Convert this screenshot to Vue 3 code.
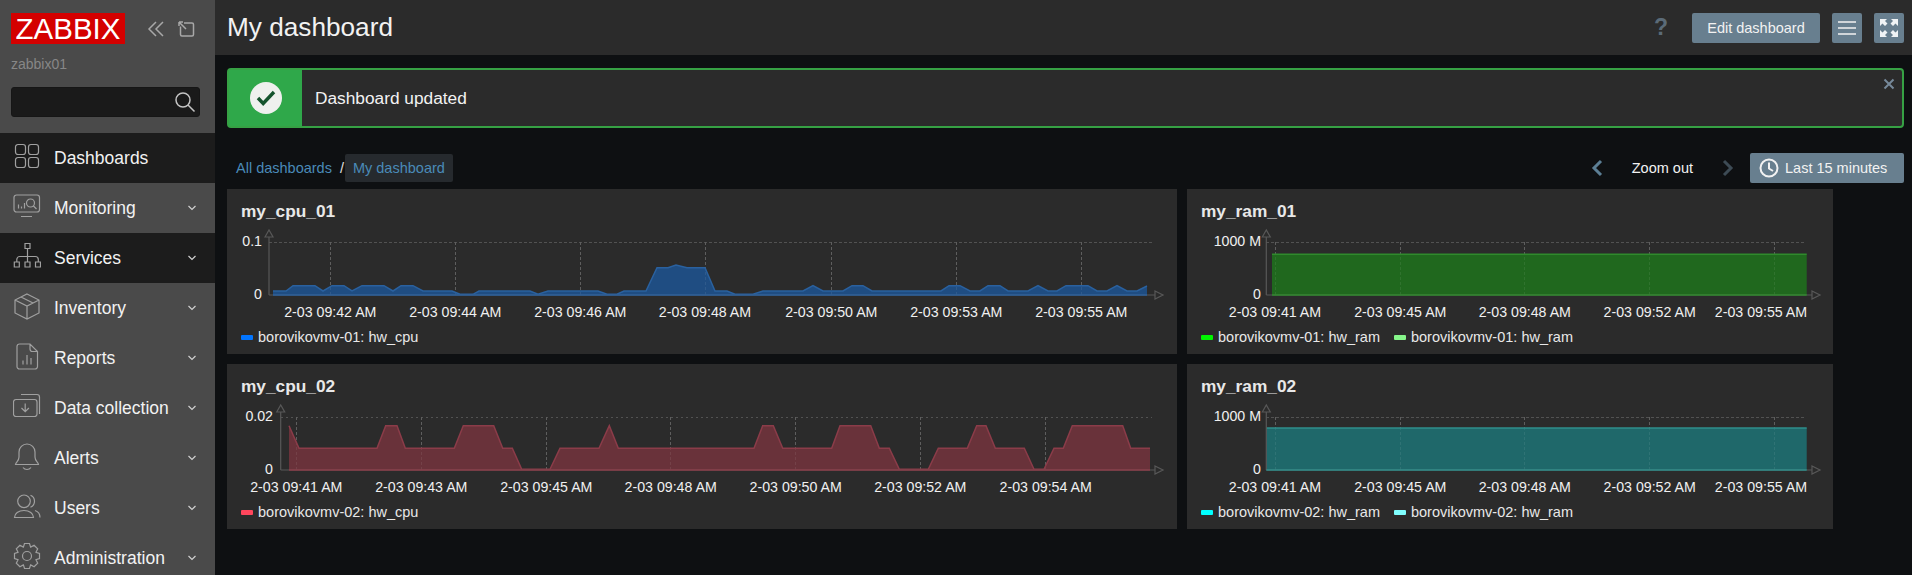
<script setup>
// gear outline for the Administration icon
const gearPath = () => {
  const cx = 14, cy = 13, out = 12.8, inn = 9.6
  let d = ''
  for (let i = 0; i < 8; i++) {
    const a = (i * Math.PI) / 4 - Math.PI / 2
    const pts = [[inn, a - 0.39], [out, a - 0.2], [out, a + 0.2], [inn, a + 0.39]]
    pts.forEach(([r, t], j) => {
      const x = (cx + r * Math.cos(t)).toFixed(1)
      const y = (cy + r * Math.sin(t)).toFixed(1)
      d += (i === 0 && j === 0 ? 'M' : 'L') + x + ' ' + y
    })
  }
  return d + 'z M18.5 13a4.5 4.5 0 1 1-9 0a4.5 4.5 0 1 1 9 0z'
}

const menu = [
  { name: 'Dashboards', dark: true, arrow: false, d: 'M5 1.5h5a2.5 2.5 0 0 1 2.5 2.5v5a2.5 2.5 0 0 1-2.5 2.5h-5a2.5 2.5 0 0 1-2.5-2.5v-5a2.5 2.5 0 0 1 2.5-2.5z M18 1.5h5a2.5 2.5 0 0 1 2.5 2.5v5a2.5 2.5 0 0 1-2.5 2.5h-5a2.5 2.5 0 0 1-2.5-2.5v-5a2.5 2.5 0 0 1 2.5-2.5z M5 14.5h5a2.5 2.5 0 0 1 2.5 2.5v5a2.5 2.5 0 0 1-2.5 2.5h-5a2.5 2.5 0 0 1-2.5-2.5v-5a2.5 2.5 0 0 1 2.5-2.5z M18 14.5h5a2.5 2.5 0 0 1 2.5 2.5v5a2.5 2.5 0 0 1-2.5 2.5h-5a2.5 2.5 0 0 1-2.5-2.5v-5a2.5 2.5 0 0 1 2.5-2.5z' },
  { name: 'Monitoring', arrow: true, d: 'M3.5 2h20.5a2.5 2.5 0 0 1 2.5 2.5v12a2.5 2.5 0 0 1-2.5 2.5h-20.5a2.5 2.5 0 0 1-2.5-2.5v-12a2.5 2.5 0 0 1 2.5-2.5z M8 23.5h11 M5.5 11.5v4 M8.5 13.5v2 M11.5 10v5.5 M21.5 10a4 4 0 1 1-8 0a4 4 0 1 1 8 0z M20.5 13l3 3' },
  { name: 'Services', dark: true, arrow: true, d: 'M12 .5h5v5h-5z M14.5 5.5v13.5 M3.8 19v-2.5a3 3 0 0 1 3-3h15.5a3 3 0 0 1 3 3v2.5 M1.3 19h5v5h-5z M12 19h5v5h-5z M22.5 19h5v5h-5z' },
  { name: 'Inventory', arrow: true, d: 'M14 1l12 6v13l-12 6l-12-6v-13z M2 7l12 6l12-6 M14 13v13 M8 4l12 6' },
  { name: 'Reports', arrow: true, d: 'M6.5 1h10.5l7.5 7.5v15a2.5 2.5 0 0 1-2.5 2.5h-15.5a2.5 2.5 0 0 1-2.5-2.5v-20a2.5 2.5 0 0 1 2.5-2.5z M17 1v5a2.5 2.5 0 0 0 2.5 2.5h5 M10 17.5v4 M14 12v9.5 M18 15v6.5' },
  { name: 'Data collection', arrow: true, d: 'M3 6.5h18.5a2.5 2.5 0 0 1 2.5 2.5v12a2.5 2.5 0 0 1-2.5 2.5h-18.5a2.5 2.5 0 0 1-2.5-2.5v-12a2.5 2.5 0 0 1 2.5-2.5z M8 1.5h16a2.5 2.5 0 0 1 2.5 2.5v17 M12.2 10.5v8 M8.5 15l3.7 3.7l3.7-3.7' },
  { name: 'Alerts', arrow: true, d: 'M14 1a8 8 0 0 0-8 8v5c0 4-3 5-3.5 7.5h23c-.5-2.5-3.5-3.5-3.5-7.5v-5a8 8 0 0 0-8-8z M10 24.5a5 5 0 0 0 8 0' },
  { name: 'Users', arrow: true, d: 'M17.3 8.3a6.3 6.3 0 1 1-12.6 0a6.3 6.3 0 1 1 12.6 0z M1.5 24.5c0-4 4-7 9.5-7s9.5 3 9.5 7z M17.5 2.3a6.5 6.5 0 0 1 0 12 M22 17.5c3 1 5 4 5 7' },
  { name: 'Administration', arrow: true, d: gearPath() },
]

const cpu1Points = [
  [273, 291], [286, 291], [293, 285.7], [315, 285.7], [323, 291], [332, 285.7], [344, 285.7], [352, 291],
  [362, 285.7], [384, 285.7], [393, 291], [401, 285.7], [413, 285.7], [423, 291], [452, 291], [460, 294.3],
  [473, 294.3], [479, 291], [530, 291], [538, 294.3], [548, 291], [598, 291], [607, 294.3], [617, 294.3],
  [624, 291], [646, 291], [657, 267.7], [668, 267.7], [676, 265], [687, 267.7], [705, 267.7], [715, 291],
  [727, 291], [735, 294.3], [753, 294.3], [763, 291], [803, 291], [813, 285.7], [823, 291], [843, 291],
  [852, 285.7], [863, 285.7], [872, 291], [941, 291], [949, 285.7], [960, 285.7], [970, 291], [980, 291],
  [988, 285.7], [1000, 285.7], [1008, 291], [1028, 291], [1038, 285.7], [1048, 291], [1057, 291],
  [1066, 285.7], [1088, 285.7], [1097, 291], [1107, 291], [1117, 285.7], [1127, 291], [1137, 291], [1147, 286],
]
const cpu2Points = [
  [289, 425.7], [299, 448.3], [377, 448.3], [385.7, 425.7], [397, 425.7], [405.3, 448.3], [454.3, 448.3],
  [463.3, 425.7], [493.7, 425.7], [502.7, 448.3], [512.3, 448.3], [521.7, 469.3], [550, 469.3], [560, 448.3],
  [599, 448.3], [609.3, 425.7], [618.3, 448.3], [754, 448.3], [762.7, 425.7], [773.3, 425.7], [782.7, 448.3],
  [831.7, 448.3], [840, 425.7], [870.7, 425.7], [879.3, 448.3], [889.3, 448.3], [899.3, 469.3], [928.3, 469.3],
  [938.3, 448.3], [967.3, 448.3], [976.7, 425.7], [986, 425.7], [995.3, 448.3], [1024.3, 448.3], [1034, 469.3],
  [1044, 469.3], [1054, 448.3], [1063.3, 448.3], [1072.3, 425.7], [1122.7, 425.7], [1130.7, 448.3], [1150, 448.3],
]

// charts use page coordinates, the viewBox moves them into each widget
const charts = [
  {
    title: 'my_cpu_01', left: 227, top: 219, width: 950, axis: 269, yEnd: 262, bottom: 295, gridTop: 242.3, xEnd: 1163, gridEnd: 1152,
    yTop: '0.1', grid: [330.3, 455.3, 580.3, 705, 831.3, 956.3, 1081.3],
    labels: [[330.3, '09:42'], [455.3, '09:44'], [580.3, '09:46'], [705, '09:48'], [831.3, '09:50'], [956.3, '09:53'], [1081.3, '09:55']],
    points: cpu1Points, fill: '#1f4e85', line: '#2a619f',
    legend: [{ color: '#0275ff', text: 'borovikovmv-01: hw_cpu' }],
  },
  {
    title: 'my_ram_01', left: 1187, top: 219, width: 646, axis: 1266.3, yEnd: 1261, bottom: 295, gridTop: 242.3, xEnd: 1820, gridEnd: 1805,
    yTop: '1000 M', grid: [1275, 1400.3, 1524.8, 1649.7, 1774],
    labels: [[1275, '09:41'], [1400.3, '09:45'], [1524.8, '09:48'], [1649.7, '09:52'], [1761, '09:55']],
    points: [[1272, 254.3], [1806.7, 254.3]], fill: '#206a1e', line: '#2f8a2c',
    legend: [{ color: '#00f500', text: 'borovikovmv-01: hw_ram' }, { color: '#86f68a', text: 'borovikovmv-01: hw_ram' }],
  },
  {
    title: 'my_cpu_02', left: 227, top: 394, width: 950, axis: 280.7, yEnd: 273, bottom: 470, gridTop: 417.3, xEnd: 1163, gridEnd: 1152,
    yTop: '0.02', grid: [296.3, 421.3, 546.3, 670.7, 795.7, 920.3, 1045.7],
    labels: [[296.3, '09:41'], [421.3, '09:43'], [546.3, '09:45'], [670.7, '09:48'], [795.7, '09:50'], [920.3, '09:52'], [1045.7, '09:54']],
    points: cpu2Points, fill: '#6b333b', line: '#8b3c49',
    legend: [{ color: '#ff465c', text: 'borovikovmv-02: hw_cpu' }],
  },
  {
    title: 'my_ram_02', left: 1187, top: 394, width: 646, axis: 1266.3, yEnd: 1261, bottom: 470, gridTop: 417.3, xEnd: 1820, gridEnd: 1805,
    yTop: '1000 M', grid: [1275, 1400.3, 1524.8, 1649.7, 1774],
    labels: [[1275, '09:41'], [1400.3, '09:45'], [1524.8, '09:48'], [1649.7, '09:52'], [1761, '09:55']],
    points: [[1266.3, 428], [1806.7, 428]], fill: '#1f6a6c', line: '#2f8f8c',
    legend: [{ color: '#00ffff', text: 'borovikovmv-02: hw_ram' }, { color: '#80ffff', text: 'borovikovmv-02: hw_ram' }],
  },
]

const areaPoints = (c) => {
  const first = c.points[0][0]
  const last = c.points[c.points.length - 1][0]
  return [[first, c.bottom], ...c.points, [last, c.bottom]].map((p) => p.join(',')).join(' ')
}
const linePoints = (c) => c.points.map((p) => p.join(',')).join(' ')
</script>

<template>
  <div class="page">
    <aside class="sidebar">
      <div class="brand">
        <div class="brand_top">
          <span class="logo">ZABBIX</span>
          <svg class="tool" width="18" height="18" viewBox="0 0 18 18">
            <path d="M9 2L2 9l7 7M16 2L9 9l7 7" />
          </svg>
          <svg class="tool" width="18" height="18" viewBox="0 0 18 18">
            <path d="M7 3h8a1.5 1.5 0 0 1 1.500 1.500v10a1.500 1.500 0 0 1-1.500 1.500h-10a1.500 1.500 0 0 1-1.500-1.500v-8 M2 2l7 7 M2 2h4 M2 2v4" />
          </svg>
        </div>
        <div class="host">zabbix01</div>
        <div class="search">
          <svg width="24" height="24" viewBox="0 0 24 24">
            <path d="M17 10a7 7 0 1 1-14 0a7 7 0 1 1 14 0z M15 15l6.5 6.5" />
          </svg>
        </div>
      </div>
      <nav class="menu">
        <a v-for="item in menu" :key="item.name" class="menu_row" :class="{ dark: item.dark }">
          <svg class="menu_icon" width="28" height="28" viewBox="0 0 28 28">
            <path :d="item.d" />
          </svg>
          <span class="menu_name">{{ item.name }}</span>
          <svg v-if="item.arrow" class="chevron" width="10" height="6" viewBox="0 0 10 6">
            <path d="M1.5 1l3.5 3.5L8.5 1" />
          </svg>
        </a>
      </nav>
    </aside>

    <main class="main">
      <header class="top_bar">
        <h1>My dashboard</h1>
        <div class="top_actions">
          <span class="help">?</span>
          <button class="btn edit">Edit dashboard</button>
          <button class="btn square">
            <svg width="20" height="16" viewBox="0 0 20 16"><path d="M1 2h18M1 8h18M1 14h18" /></svg>
          </button>
          <button class="btn square">
            <svg class="fill_icon" width="20" height="20" viewBox="0 0 20 20">
              <path d="M1 1h7L6 3l2.5 2.5L6 8L3.5 5.5L1 8z M19 1h-7l2 2l-2.5 2.5L14 8l2.5-2.5L19 8z M1 19h7l-2-2l2.5-2.5L6 12l-2.5 2.5L1 12z M19 19h-7l2-2l-2.5-2.5L14 12l2.5 2.5L19 12z" />
            </svg>
          </button>
        </div>
      </header>

      <div class="message">
        <div class="message_mark">
          <svg width="34" height="34" viewBox="0 0 34 34">
            <circle cx="17" cy="17" r="16" fill="#eef0ee" />
            <path d="M9 17l5.2 5.5L25 11" fill="none" stroke="#14532d" stroke-width="3.4" />
          </svg>
        </div>
        <span class="message_text">Dashboard updated</span>
        <svg class="message_close" width="12" height="12" viewBox="0 0 12 12">
          <path d="M1.5 1.5l9 9M10.5 1.5l-9 9" />
        </svg>
      </div>

      <div class="filter_row">
        <div class="crumbs">
          <a class="crumb">All dashboards</a>
          <span class="slash">/</span>
          <a class="crumb current">My dashboard</a>
        </div>
        <div class="time_controls">
          <svg class="nav_arrow" width="12" height="18" viewBox="0 0 12 18"><path d="M10 2L3 9l7 7" /></svg>
          <span class="zoom_out">Zoom out</span>
          <svg class="nav_arrow off" width="12" height="18" viewBox="0 0 12 18"><path d="M2 2l7 7l-7 7" /></svg>
          <button class="btn range">
            <svg width="20" height="20" viewBox="0 0 20 20">
              <circle cx="10" cy="10" r="8.5" fill="none" stroke="#f2f2f2" stroke-width="2" />
              <path d="M10 4.5V10.5L14 13" fill="none" stroke="#f2f2f2" stroke-width="2" />
            </svg>
            Last 15 minutes
          </button>
        </div>
      </div>

      <section class="widgets">
        <article v-for="c in charts" :key="c.title" class="widget">
          <h2>{{ c.title }}</h2>
          <svg class="chart" :width="c.width" height="107" :viewBox="`${c.left} ${c.top} ${c.width} 107`">
            <line v-for="g in c.grid" :key="g" :x1="g" :x2="g" :y1="c.gridTop" :y2="c.bottom" class="grid" />
            <line :x1="c.axis" :x2="c.gridEnd" :y1="c.gridTop" :y2="c.gridTop" class="grid" />
            <polygon :points="areaPoints(c)" :fill="c.fill" fill-opacity="0.97" />
            <line v-for="g in c.grid" :key="'o' + g" :x1="g" :x2="g" :y1="c.gridTop" :y2="c.bottom" class="grid over" />
            <polyline :points="linePoints(c)" fill="none" :stroke="c.line" stroke-width="1.5" />
            <line :x1="c.axis" :x2="c.axis" :y1="c.bottom - 58" :y2="c.bottom" class="axis" />
            <line :x1="c.axis" :x2="c.xEnd - 8" :y1="c.bottom" :y2="c.bottom" class="axis" />
            <path class="axis" fill="none" :d="`M${c.axis - 4} ${c.bottom - 58}l4-7l4 7z`" />
            <path class="axis" fill="none" :d="`M${c.xEnd - 8} ${c.bottom - 4}l8 4l-8 4z`" />
            <polyline :points="`${c.points[0][0]},${c.bottom} ${c.points[c.points.length - 1][0]},${c.bottom}`" fill="none" :stroke="c.line" stroke-width="1.5" />
            <text :x="c.yEnd" :y="c.gridTop + 4" text-anchor="end" class="tick">{{ c.yTop }}</text>
            <text :x="c.yEnd" :y="c.bottom + 4" text-anchor="end" class="tick">0</text>
            <text v-for="l in c.labels" :key="l[0]" :x="l[0]" :y="c.bottom + 22" text-anchor="middle" class="tick">2-03 {{ l[1] }} AM</text>
          </svg>
          <div class="legend">
            <span v-for="(s, i) in c.legend" :key="i" class="legend_item">
              <i class="swatch" :style="{ background: s.color }"></i>{{ s.text }}
            </span>
          </div>
        </article>
      </section>
    </main>
  </div>
</template>

<style>
html, body {
  margin: 0;
  background: #0e1012;
}
</style>

<style scoped>
.page {
  display: flex;
  height: 575px;
  overflow: hidden;
  background: #0e1012;
  color: #f2f2f2;
  font-family: "Liberation Sans", Arial, sans-serif;
  font-size: 14.5px;
}

/* sidebar */
.sidebar {
  width: 215px;
  flex: none;
  background: #4a4a4a;
}
.brand {
  height: 133px;
  padding: 13px 0 0 11px;
  box-sizing: border-box;
}
.brand_top {
  display: flex;
  align-items: center;
}
.logo {
  flex: none;
  width: 114px;
  height: 31px;
  background: #d40000;
  color: #fff;
  font-size: 29.5px;
  line-height: 31px;
  text-align: center;
  margin-right: 22px;
}
.tool {
  flex: none;
  margin-right: 12px;
}
.tool path {
  fill: none;
  stroke: #a8a8a8;
  stroke-width: 1.5;
}
.host {
  margin-top: 12px;
  height: 18px;
  font-size: 14px;
  color: #878787;
}
.search {
  margin-top: 13px;
  width: 189px;
  height: 30px;
  box-sizing: border-box;
  background: #1a1a1a;
  border: 1px solid #161616;
  border-radius: 3px;
  display: flex;
  align-items: center;
  justify-content: flex-end;
  padding-right: 2px;
}
.search path {
  fill: none;
  stroke: #c4c4c4;
  stroke-width: 1.5;
}
.menu_row {
  display: flex;
  align-items: center;
  height: 50px;
  padding-left: 13px;
  box-sizing: border-box;
}
.menu_row.dark {
  background: #1c1c1c;
}
.menu_icon {
  flex: none;
  margin-top: -3px;
}
.menu_icon path {
  fill: none;
  stroke: #a0a0a0;
  stroke-width: 1.2;
}
.menu_name {
  margin-left: 13px;
  font-size: 17.5px;
  flex: 1;
}
.chevron {
  margin-right: 18px;
}
.chevron path {
  fill: none;
  stroke: #d0d0d0;
  stroke-width: 1.2;
}

/* main column */
.main {
  flex: 1;
  min-width: 0;
}
.top_bar {
  height: 55px;
  background: #2b2b2b;
  display: flex;
  align-items: center;
  justify-content: space-between;
  padding: 0 8px 0 12px;
}
h1 {
  margin: 0 0 1px;
  font-size: 26.2px;
  font-weight: 400;
}
.top_actions {
  display: flex;
  align-items: center;
}
.help {
  font-size: 23px;
  font-weight: 700;
  color: #5b6b78;
  margin-right: 24px;
}
.btn {
  border: 0;
  background: #687f8f;
  color: #f2f2f2;
  border-radius: 2px;
  font: inherit;
  height: 30px;
  padding: 0;
  display: flex;
  align-items: center;
  justify-content: center;
}
.edit {
  width: 128px;
}
.square {
  width: 30px;
  margin-left: 12px;
}
.square path {
  fill: none;
  stroke: #f2f2f2;
  stroke-width: 1.3;
}
.square .fill_icon path {
  fill: #f0f3f5;
  stroke: none;
}
.message {
  position: relative;
  display: flex;
  align-items: center;
  height: 60px;
  margin: 13px 8px 0 12px;
  box-sizing: border-box;
  background: #2b2b2b;
  border: 2px solid #36a144;
  border-radius: 4px;
}
.message_mark {
  width: 73px;
  align-self: stretch;
  background: #2fa84a;
  display: flex;
  align-items: center;
  justify-content: center;
  flex: none;
}
.message_text {
  margin-left: 13px;
  font-size: 17.3px;
}
.message_close {
  position: absolute;
  top: 8px;
  right: 7px;
}
.message_close path {
  fill: none;
  stroke: #76899a;
  stroke-width: 2;
}
.filter_row {
  display: flex;
  align-items: center;
  justify-content: space-between;
  height: 30px;
  margin: 25px 8px 6px 12px;
}
.crumbs {
  display: flex;
  align-items: center;
}
.crumb {
  color: #4a8ab8;
  padding: 0 8px 0 9px;
}
.crumb.current {
  height: 28px;
  line-height: 28px;
  background: #262a2e;
  border-radius: 2px;
  padding: 0 8px;
}
.slash {
  margin-right: 1px;
  color: #e0e0e0;
}
.time_controls {
  display: flex;
  align-items: center;
}
.nav_arrow path {
  fill: none;
  stroke: #5c7f95;
  stroke-width: 3;
}
.nav_arrow.off path {
  stroke: #3d4b55;
}
.zoom_out {
  margin: 0 29px;
}
.range {
  width: 154px;
  margin-left: 16px;
  padding-left: 9px;
  gap: 6px;
  justify-content: flex-start;
}

/* widgets */
.widgets {
  display: grid;
  grid-template-columns: 950px 646px;
  grid-auto-rows: 165px;
  gap: 10px;
  margin-left: 12px;
}
.widget {
  background: #2b2b2b;
  position: relative;
  overflow: hidden;
}
h2 {
  margin: 0;
  height: 30px;
  padding-left: 14px;
  line-height: 45px;
  font-size: 17.3px;
  font-weight: 700;
  color: #e8e8e8;
}
.chart {
  display: block;
}
.grid {
  stroke: #525252;
  stroke-dasharray: 2.5 2.5;
  stroke-width: 1;
  shape-rendering: crispEdges;
}
.grid.over {
  stroke: #ffffff;
  stroke-opacity: 0.07;
}
.axis {
  stroke: #585858;
  stroke-width: 1.2;
}
.tick {
  fill: #f0f0f0;
  font-size: 14.2px;
}
.legend {
  display: flex;
  gap: 14px;
  padding-left: 14px;
  height: 28px;
  align-items: flex-start;
  font-size: 14.5px;
  line-height: 22px;
  color: #e8e8e8;
}
.legend_item {
  display: flex;
  align-items: center;
}
.swatch {
  width: 12px;
  height: 5px;
  border-radius: 1px;
  margin-right: 5px;
}
</style>
